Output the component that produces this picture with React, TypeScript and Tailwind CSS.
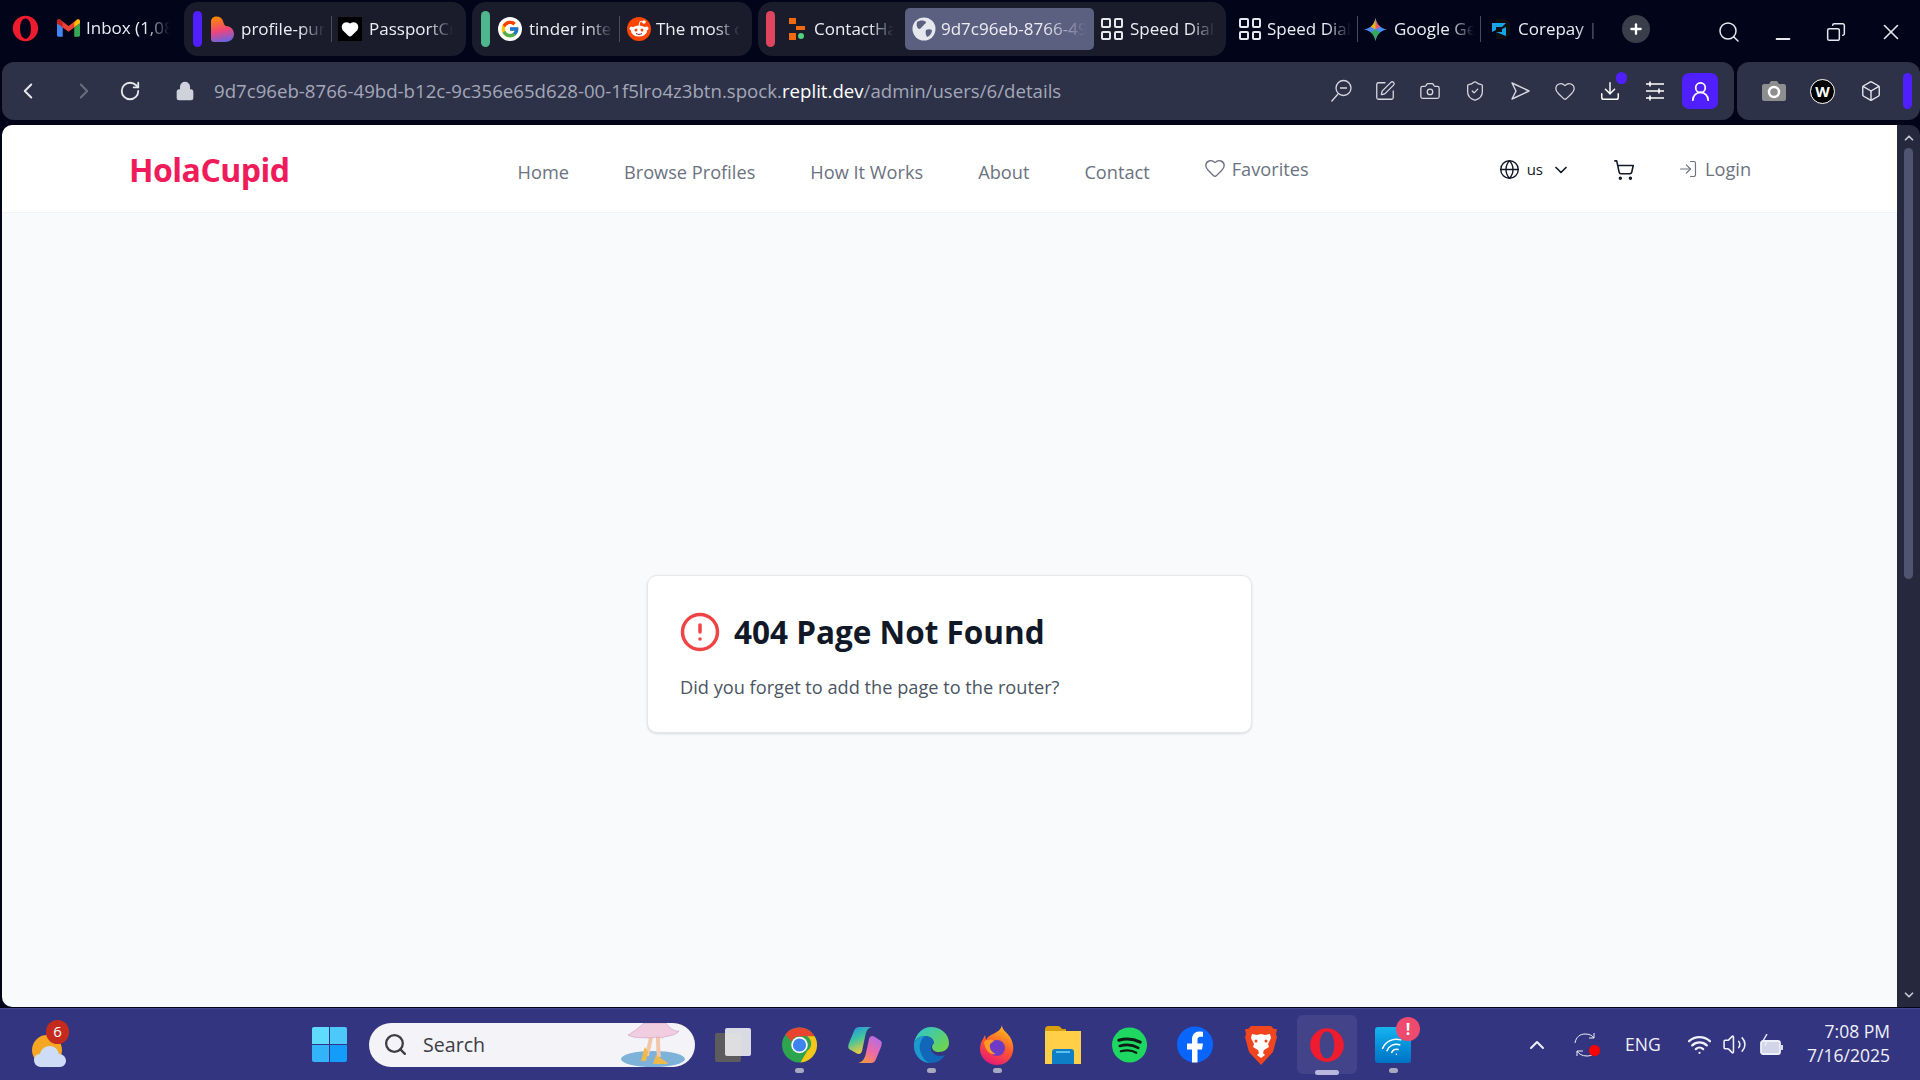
import React from "react";
import { FcGoogle } from "react-icons/fc";
import {
  ChevronDown,
  ChevronLeft,
  ChevronRight,
  ChevronUp,
  CircleAlert,
  Globe,
  Heart,
  LogIn,
  RotateCw,
  Search,
  ShoppingCart,
  Lock,
  Minus,
  X,
  Copy,
  SquarePen,
  Camera,
  ShieldCheck,
  Download,
  UserRound,
  Box,
  Plus,
  Wifi,
  Volume2,
} from "lucide-react";

const OperaLogo = ({ size = 30 }: { size?: number }) => (
  <svg width={size} height={size} viewBox="0 0 32 32">
    <path
      fillRule="evenodd"
      fill="#ee1c2e"
      d="M16 1c8.300 0 15 6.700 15 15s-6.700 15-15 15S1 24.300 1 16 7.700 1 16 1Zm0 3c-4 0-6.500 5.400-6.500 12S12 28 16 28s6.500-5.400 6.500-12S20 4 16 4Z"
    />
  </svg>
);

const GmailIcon = () => (
  <svg width="23" height="18" viewBox="0 0 24 18">
    <path fill="#4285f4" d="M0 4v12.500C0 17.300.7 18 1.500 18H6V8Z" />
    <path fill="#34a853" d="M24 4v12.500c0 .8-.7 1.500-1.500 1.500H18V8Z" />
    <path fill="#ea4335" d="M0 2c0-2 2.300-2.700 3.500-1.500L12 7l8.500-6.500C21.700-.7 24 0 24 2v2l-12 9L0 4Z" />
    <path fill="#fbbc04" d="M18 3.500 20.500.5C21.700-.7 24 0 24 2v2l-6 4Z" />
    <path fill="#c5221f" d="M0 2c0-2 2.300-2.700 3.500-1.500L6 3v5L0 4Z" />
  </svg>
);

const PinkHeart = () => (
  <svg width="24" height="26" viewBox="0 0 24 26">
    <defs>
      <linearGradient id="ph" x1="0.3" y1="0" x2="0.5" y2="1">
        <stop offset="0" stopColor="#ff8a00" />
        <stop offset="0.55" stopColor="#f0457a" />
        <stop offset="1" stopColor="#6a64e0" />
      </linearGradient>
    </defs>
    <path fill="url(#ph)" d="M1 6c0-7 10-7 12-1 1 3 1 4 3 5 4 0 8 3 8 8s-4 8-9 8H4c-2 0-3-1-3-3Z" />
  </svg>
);

const PassportIcon = () => (
  <div className="flex h-6 w-6 items-center justify-center bg-black">
    <Heart size={18} fill="#fff" color="#fff" />
  </div>
);

const GoogleIcon = () => (
  <div className="flex h-6 w-6 items-center justify-center rounded-full bg-white">
    <FcGoogle size={20} />
  </div>
);

const RedditIcon = () => (
  <svg width="24" height="24" viewBox="0 0 24 24">
    <circle cx="12" cy="12" r="12" fill="#ff4500" />
    <ellipse cx="12" cy="14" rx="8" ry="5.500" fill="#fff" />
    <circle cx="4.500" cy="11.500" r="2" fill="#fff" />
    <circle cx="19.500" cy="11.500" r="2" fill="#fff" />
    <circle cx="17" cy="5" r="1.800" fill="#fff" />
    <path d="M12 9 13 4.500 17 5" stroke="#fff" strokeWidth="1" fill="none" />
    <circle cx="9" cy="13" r="1.500" fill="#ff4500" />
    <circle cx="15" cy="13" r="1.500" fill="#ff4500" />
    <path d="M9 16.500c2 1.200 4 1.200 6 0" stroke="#842123" strokeWidth="1" fill="none" />
  </svg>
);

const ContactIcon = () => (
  <svg width="16" height="22" viewBox="0 0 16 22">
    <rect x="0" y="0" width="7" height="6" fill="#f26a0f" />
    <rect x="7" y="8" width="9" height="4" fill="#f26a0f" />
    <rect x="0" y="15" width="7" height="7" fill="#f26a0f" />
    <circle cx="12" cy="18" r="3" fill="#4fd27b" />
  </svg>
);

const TabGlobe = () => (
  <svg width="24" height="24" viewBox="0 0 24 24">
    <circle cx="12" cy="12" r="11.500" fill="#e6e8ee" />
    <path fill="#5c6080" d="M5 5c3-2 7-2 9 0 0 2-2 2-3 4-2 1-2 3-4 3-2-1-3-4-2-7Zm9 8c2-1 4-1 6 0 0 3-2 6-5 7-1-2-2-4-1-7Z" />
  </svg>
);

const SpeedDialIcon = () => (
  <div className="grid h-[22px] w-[22px] grid-cols-2 gap-[3px]">
    <span className="rounded-[2px] border-2 border-[#e6e8ee]" />
    <span className="rounded-[2px] border-2 border-[#e6e8ee]" />
    <span className="rounded-[2px] border-2 border-[#e6e8ee]" />
    <span className="rounded-[2px] border-2 border-[#e6e8ee]" />
  </div>
);

const GeminiIcon = () => (
  <svg width="23" height="25" viewBox="0 0 24 24">
    <path fill="#4a8cf7" d="M12 0c1 6 5 11 12 12-7 1-11 6-12 12-1-6-5-11-12-12C7 11 11 6 12 0Z" />
    <path fill="#ec5a62" d="M12 0c.5 4 2 7 5 9l-5 3Z" />
    <path fill="#f4b400" d="M12 0c-.5 4-2 7-5 9l5 3Z" />
    <path fill="#35a85a" d="M12 24c-.5-4-2-7-5-9l5-3 5 3c-3 2-4.500 5-5 9Z" />
  </svg>
);

const CorepayIcon = () => (
  <svg width="20" height="22" viewBox="0 0 20 22">
    <path fill="#0f0f14" d="M5 1h9l5 4v12l-5 4H5Z" />
    <path fill="#16a6e8" d="M1 5h14l-4 4H5v3l-4 2ZM5 14h6v-3l4-2v9Z" />
  </svg>
);

const Tab = ({
  icon,
  label,
  className = "w-[84px]",
  gap = "ml-[7px]",
}: {
  icon: React.ReactNode;
  label: string;
  className?: string;
  gap?: string;
}) => (
  <div className="flex items-center">
    {icon}
    <span
      className={`${gap} ${className} whitespace-nowrap text-[17px] text-[#eceef3] [mask-image:linear-gradient(90deg,#000_70%,transparent)]`}
    >
      {label}
    </span>
  </div>
);

const Sep = ({ className = "" }: { className?: string }) => (
  <span className={`h-[26px] w-px bg-[#4a4c5c] ${className}`} />
);

const TabBar = () => (
  <div className="flex h-[62px] items-start pt-[2px]">
    <div className="ml-[12px] mt-[13px]">
      <OperaLogo size={27} />
    </div>
    <div className="ml-[18px] mt-[13px] flex">
      <Tab icon={<GmailIcon />} label="Inbox (1,08" gap="ml-[6px]" />
    </div>

    <div className="ml-[14px] flex h-[54px] w-[282px] items-center rounded-[14px] bg-[#1a1c2c] pl-[9px]">
      <span className="h-9 w-[9px] rounded-full bg-[#4f1fff]" />
      <div className="ml-[8px]">
        <Tab icon={<PinkHeart />} label="profile-pur" />
      </div>
      <Sep className="ml-[6px]" />
      <div className="ml-[6px]">
        <Tab icon={<PassportIcon />} label="PassportCr" />
      </div>
    </div>

    <div className="ml-[6px] flex h-[54px] w-[280px] items-center rounded-[14px] bg-[#1a1c2c] pl-[9px]">
      <span className="h-9 w-[9px] rounded-full bg-[#4fb58c]" />
      <div className="ml-[8px]">
        <Tab icon={<GoogleIcon />} label="tinder inte" />
      </div>
      <Sep className="ml-[6px]" />
      <div className="ml-[7px]">
        <Tab icon={<RedditIcon />} label="The most c" gap="ml-[5px]" />
      </div>
    </div>

    <div className="ml-[6px] flex h-[54px] w-[468px] items-center rounded-[14px] bg-[#1a1c2c] pl-[8px]">
      <span className="h-9 w-[9px] rounded-full bg-[#e0455f]" />
      <div className="ml-[14px]">
        <Tab icon={<ContactIcon />} label="ContactHa" gap="ml-[9px]" className="w-[80px]" />
      </div>
      <div className="ml-[11px] flex h-[42px] w-[189px] items-center rounded-[5px] bg-[#5c6080] pl-[7px]">
        <Tab icon={<TabGlobe />} label="9d7c96eb-8766-49" gap="ml-[5px]" className="w-[146px]" />
      </div>
      <div className="ml-[7px]">
        <Tab icon={<SpeedDialIcon />} label="Speed Dial" className="w-[85px]" />
      </div>
    </div>

    <div className="ml-[13px] mt-[13px] flex items-center">
      <Tab icon={<SpeedDialIcon />} label="Speed Dial" gap="ml-[6px]" className="w-[84px]" />
      <Sep className="ml-[6px]" />
      <div className="ml-[6px]">
        <Tab icon={<GeminiIcon />} label="Google Ge" className="w-[80px]" />
      </div>
      <Sep className="ml-[6px]" />
      <div className="ml-[10px]">
        <Tab icon={<CorepayIcon />} label="Corepay | " gap="ml-[7px]" className="w-[84px]" />
      </div>
      <div className="ml-[20px] flex h-[28px] w-[28px] items-center justify-center rounded-full bg-[#3a3d4a]">
        <Plus size={16} color="#fff" strokeWidth={3.5} />
      </div>
    </div>

    <div className="ml-auto mt-[12px] mr-[16px] flex items-center gap-[32px] text-[#e6e8ee]">
      <Search size={24} strokeWidth={1.5} className="mr-[-1px]" />
      <Minus size={22} strokeWidth={2} className="mt-[14px]" />
      <Copy size={20} strokeWidth={1.8} className="-scale-x-100" />
      <X size={26} strokeWidth={1.5} />
    </div>
  </div>
);

const AddressBar = () => (
  <div className="flex h-[58px] gap-[3px] pl-[2px]">
    <div className="flex w-[1732px] items-center rounded-[12px] bg-[#2e3248]">
      <ChevronLeft size={26} strokeWidth={1.8} color="#e6e8ee" className="ml-[13px]" />
      <ChevronRight size={26} strokeWidth={1.8} color="#6a6e82" className="ml-[30px]" />
      <RotateCw size={22} strokeWidth={2} color="#e6e8ee" className="ml-[22px]" />
      <Lock size={20} fill="#cfd2da" color="#cfd2da" className="ml-[34px]" />
      <div className="ml-[19px] whitespace-nowrap text-[18.65px] text-[#a3a7b8]">
        9d7c96eb-8766-49bd-b12c-9c356e65d628-00-1f5lro4z3btn.spock.
        <span className="text-white">replit.dev</span>/admin/users/6/details
      </div>
      <div className="ml-auto flex items-center gap-[23px] text-[#d6d8e0]">
        <svg width="22" height="24" viewBox="0 0 22 24" fill="none" stroke="currentColor" strokeWidth="1.300" className="mr-[-1px]">
          <circle cx="13.500" cy="9" r="7.500" />
          <path d="M10 9h7M8 15l-6.500 7.500" />
        </svg>
        <SquarePen size={22} strokeWidth={1.4} />
        <Camera size={22} strokeWidth={1.4} />
        <ShieldCheck size={22} strokeWidth={1.4} />
        <svg width="22" height="22" viewBox="0 0 22 22" fill="none" stroke="currentColor" strokeWidth="1.400">
          <path d="M3 3 20 11 3 19l4-8Z" strokeLinejoin="round" />
        </svg>
        <Heart size={22} strokeWidth={1.4} />
        <div className="relative text-white">
          <Download size={22} strokeWidth={1.6} />
          <span className="absolute -right-[6px] -top-[8px] h-[12px] w-[11px] rounded-full bg-[#4f1fff]" />
        </div>
        <svg width="22" height="22" viewBox="0 0 22 22" fill="none" stroke="#fff" strokeWidth="1.600">
          <path d="M2 4h18M2 11h18M2 18h18M6 1.500v5M15 8.500v5M6 15.500v5" />
        </svg>
      </div>
      <div className="ml-[16px] mr-[16px] flex h-9 w-9 items-center justify-center rounded-[7px] bg-[#4f1fff]">
        <UserRound size={23} strokeWidth={1.8} color="#fff" />
      </div>
    </div>
    <div className="flex flex-1 items-center rounded-[12px] bg-[#2e3248] pr-[8px]">
      <svg className="ml-[25px]" width="24" height="22" viewBox="0 0 24 22">
        <path fill="#8e8e8e" d="M2 4h5l2-3h6l2 3h5c1 0 2 1 2 2v13c0 1-1 2-2 2H2c-1 0-2-1-2-2V6c0-1 1-2 2-2Z" />
        <circle cx="12" cy="12" r="5" fill="none" stroke="#fff" strokeWidth="2.500" />
      </svg>
      <div className="ml-[24px] flex h-[25px] w-[25px] items-center justify-center rounded-full border border-white bg-black text-[15px] font-bold leading-none text-white">
        W
      </div>
      <Box size={22} strokeWidth={1.5} color="#e6e8ee" className="ml-[25px]" />
      <span className="ml-auto h-9 w-[9px] rounded-full bg-[#4f1fff]" />
    </div>
  </div>
);

const NavBar = () => (
  <header className="flex h-[88px] items-center border-b border-[#f1f2f4] bg-white pt-[5px] text-[#6b7280]">
    <span className="-mt-[2px] ml-[127px] text-[32px] font-bold tracking-[-0.5px] text-[#f01b5a]">HolaCupid</span>
    <nav className="ml-[228px] flex items-center gap-[55px] pt-[3px] text-[18.2px] font-medium">
      <span>Home</span>
      <span>Browse Profiles</span>
      <span>How It Works</span>
      <span>About</span>
      <span>Contact</span>
    </nav>
    <div className="ml-[54px] flex items-center gap-[6px] pb-[3px] text-[18.2px] font-medium">
      <Heart size={22} strokeWidth={1.5} className="-mt-[2px]" />
      <span>Favorites</span>
    </div>
    <div className="ml-[190px] flex items-center pb-[3px] text-[#111827]">
      <Globe size={21} strokeWidth={1.6} />
      <span className="ml-[7px] text-[15px] font-medium">us</span>
      <ChevronDown size={20} strokeWidth={2} className="ml-[8px]" />
    </div>
    <ShoppingCart size={22} strokeWidth={1.7} color="#111827" className="ml-[42px] mb-[3px]" />
    <div className="ml-[43px] flex items-center gap-[7px] pb-[3px] text-[18.2px] font-medium">
      <LogIn size={20} strokeWidth={1.4} />
      <span>Login</span>
    </div>
  </header>
);

const NotFoundCard = () => (
  <main className="flex flex-1 justify-center bg-[#f9fafb] pt-[362px]">
    <div className="h-[158px] w-[605px] rounded-[10px] border border-[#e5e7eb] bg-white pl-[32px] pt-[32px] shadow-sm">
      <div className="flex items-center">
        <CircleAlert size={42} strokeWidth={2} color="#ef4444" className="-ml-[1px]" />
        <h1 className="ml-[13px] text-[31.5px] font-bold text-[#111827]">404 Page Not Found</h1>
      </div>
      <p className="mt-[19px] text-[18.2px] text-[#4b5563]">Did you forget to add the page to the router?</p>
    </div>
  </main>
);

const Scrollbar = () => (
  <div className="flex w-[23px] flex-col items-center rounded-tr-[10px] bg-[#26293d]">
    <ChevronUp size={14} strokeWidth={3} color="#c4c7d2" className="mt-[6px]" />
    <div className="mt-[3px] h-[431px] w-[9px] rounded-full bg-[#505470]" />
    <ChevronDown size={14} strokeWidth={3} color="#c4c7d2" className="mb-[5px] mt-auto" />
  </div>
);

const WeatherIcon = () => (
  <div className="relative h-[44px] w-[36px]">
    <span className="absolute left-[1px] top-[12px] h-[30px] w-[30px] rounded-full bg-[#f5a623]" />
    <svg className="absolute bottom-0 left-[3px]" width="32" height="24" viewBox="0 0 32 24">
      <path fill="#cfdcf7" d="M7 24C2 24 0 20 0 17c0-4 3-6 6-6 1-5 5-8 10-8 4 0 8 3 9 8 4 0 7 3 7 7 0 3-3 6-6 6Z" />
    </svg>
    <span className="absolute -top-[3px] left-[15px] flex h-[24px] w-[23px] items-center justify-center rounded-full bg-[#c42b1c] text-[15px] text-white">
      6
    </span>
  </div>
);

const WinLogo = () => (
  <div className="grid h-[35px] w-[35px] grid-cols-2 gap-[1px]">
    <span className="rounded-tl-[2px] bg-[#5fdcfb]" />
    <span className="rounded-tr-[2px] bg-[#4cc8fb]" />
    <span className="rounded-bl-[2px] bg-[#33b3fa]" />
    <span className="rounded-br-[2px] bg-[#149cfa]" />
  </div>
);

const Dancer = () => (
  <svg width="70" height="44" viewBox="0 0 70 44">
    <ellipse cx="32" cy="36" rx="32" ry="8" fill="#7fb2d8" />
    <path d="M30 14c-1 7-3 12-4 19" stroke="#f2c6a8" strokeWidth="4" fill="none" />
    <path d="M37 14c0 7 0 12 1 20" stroke="#f2c6a8" strokeWidth="4" fill="none" />
    <path d="M20 38c2-6 2-10 4-14l3 5-2 9Z" fill="#f0b94a" />
    <path d="M32 41l3-9 12 8-1 1Z" fill="#f0b94a" />
    <path d="M7 12C14 8 20 3 23 0h22c3 5 9 9 13 8-5 6-12 4-17 7-5-2-9 0-14 0-5-1-12 1-20-3Z" fill="#f1cde0" stroke="#d5a5c5" strokeWidth="0.7" />
  </svg>
);

const ChromeIcon = () => (
  <svg width="35" height="36" viewBox="0 0 36 36">
    <circle cx="18" cy="18" r="18" fill="#2da44e" />
    <path fill="#e8442f" d="M18 0a18 18 0 0 1 15.600 9H18a9 9 0 0 0-8.300 5.500L3.500 7A18 18 0 0 1 18 0Z" />
    <path fill="#f5c518" d="M33.600 9A18 18 0 0 1 19 36l7-12a9 9 0 0 0 0-15Z" />
    <circle cx="18" cy="18" r="8.500" fill="#fff" />
    <circle cx="18" cy="18" r="6.800" fill="#3f83ee" />
  </svg>
);

const CopilotIcon = () => (
  <svg width="34" height="38" viewBox="0 0 34 38">
    <defs>
      <linearGradient id="cp1" x1="0" y1="0" x2="0.4" y2="1">
        <stop offset="0" stopColor="#1f8fe8" />
        <stop offset="0.5" stopColor="#3fc4a0" />
        <stop offset="1" stopColor="#f2c93c" />
      </linearGradient>
      <linearGradient id="cp2" x1="0.8" y1="0" x2="0.2" y2="1">
        <stop offset="0" stopColor="#b06ee8" />
        <stop offset="0.55" stopColor="#ee6aa5" />
        <stop offset="1" stopColor="#f59a3c" />
      </linearGradient>
    </defs>
    <path fill="url(#cp1)" d="M11 1h13c-5 1-6 5-7 10l-3 14c-1 3-3 4-6 2l-7-4C0 22 0 20 1 17l5-12c1-3 3-4 5-4Z" />
    <path fill="url(#cp2)" d="M23 37H10c5-1 7-5 8-10l3-14c1-3 3-4 6-2l6 4c1 1 1 3 0 6l-5 12c-1 3-3 4-5 4Z" />
  </svg>
);

const EdgeIcon = () => (
  <svg width="36" height="38" viewBox="0 0 36 38">
    <defs>
      <linearGradient id="ed1" x1="0" y1="0" x2="1" y2="0.8">
        <stop offset="0" stopColor="#2bc3d9" />
        <stop offset="1" stopColor="#6fd54a" />
      </linearGradient>
    </defs>
    <path fill="url(#ed1)" d="M18 1c10 0 18 7 18 16 0 6-5 9-10 9-4 0-7-2-7-5 0-2 1-3 2-4-1-5-5-7-9-7-5 0-9 3-11 7C3 8 9 1 18 1Z" />
    <path fill="#1267b8" d="M1 17c2-4 6-7 11-7s8 2 9 7c-3 2-4 5-2 9 3 4 8 5 13 3-3 5-8 8-14 8C8 37 0 29 1 17Z" />
    <path fill="#1c9ad0" d="M1 17c2-4 6-7 11-7-4 3-6 8-5 14 1 5 4 10 9 13C7 36 0 28 1 17Z" />
  </svg>
);

const FirefoxIcon = () => (
  <svg width="34" height="40" viewBox="0 0 34 40">
    <defs>
      <linearGradient id="ff1" x1="0.7" y1="0" x2="0.3" y2="1">
        <stop offset="0" stopColor="#ffc31f" />
        <stop offset="0.5" stopColor="#ff5a2c" />
        <stop offset="1" stopColor="#e6177a" />
      </linearGradient>
    </defs>
    <path fill="url(#ff1)" d="M22 0c0 5 4 6 8 12 4 7 4 13 2 18-3 7-9 10-15 10C8 40 0 33 0 24c0-4 1-7 3-10l2-4 1 5c2-4 5-5 7-6 4-2 8-4 9-9Z" />
    <circle cx="17" cy="23" r="8" fill="#6e3bc7" />
    <path fill="#ff9a25" d="M4 17c3-3 7-3 10-1l-4 3c-1 4 1 8 6 10-6 1-11-3-12-12Z" />
  </svg>
);

const FolderIcon = () => (
  <svg width="36" height="38" viewBox="0 0 36 38">
    <path fill="#d89e0c" d="M0 3c0-1 1-3 3-3h10c2 0 3 2 4 3h4v5H0Z" />
    <path fill="#ffcf47" d="M0 5h36v33H0Z" />
    <path fill="#0e7fc6" d="M7 26c0-2 1-3 3-3h16c2 0 3 1 3 3v12H7Z" />
    <rect x="11" y="25" width="14" height="2" fill="#5cc0ef" />
  </svg>
);

const SpotifyIcon = () => (
  <svg width="35" height="36" viewBox="0 0 36 36">
    <circle cx="18" cy="18" r="18" fill="#1ed760" />
    <g fill="none" stroke="#0f1a14" strokeLinecap="round">
      <path d="M7 13c8-2 16-1 22 2" strokeWidth="3.200" />
      <path d="M8 19c7-2 14-1 19 2" strokeWidth="2.700" />
      <path d="M9 24.500c6-1.500 12-1 16 1.500" strokeWidth="2.200" />
    </g>
  </svg>
);

const FacebookIcon = () => (
  <svg width="36" height="37" viewBox="0 0 36 36">
    <circle cx="18" cy="18" r="18" fill="#0866ff" />
    <path fill="#fff" d="M15 36V23h-5v-6h5v-4c0-5 3-8 7-8 2 0 4 .3 4 .3v5h-2.500c-2.300 0-3 1.400-3 3V17H26l-1 6h-4.500v13Z" />
  </svg>
);

const BraveIcon = () => (
  <svg width="32" height="40" viewBox="0 0 32 40">
    <path fill="#f1451f" d="M6 1h20l3 3 3 0-1 5 1 3-4 15-12 13L4 27 0 12l1-3-1-5h3Z" />
    <path fill="#fff" d="M7 9l5 1 4-1 4 1 5-1 1 4-3 6 1 3-5 3-1 3 2 2-4 3-4-3 2-2-1-3-5-3 1-3-3-6Z" />
    <circle cx="11" cy="16" r="1.500" fill="#f1451f" />
    <circle cx="21" cy="16" r="1.500" fill="#f1451f" />
  </svg>
);

const AppIcon = () => (
  <div className="relative h-[36px] w-[36px] rounded-[3px] bg-gradient-to-b from-[#17b4ee] to-[#0072c6]">
    <Wifi size={24} strokeWidth={1.5} color="#fff" className="absolute left-[6px] top-[8px] -rotate-[25deg]" />
    <span className="absolute -right-[9px] -top-[10px] flex h-[24px] w-[24px] items-center justify-center rounded-full bg-[#ee4a6d] text-[16px] font-bold leading-none text-white">
      !
    </span>
  </div>
);

const dockApps = [
  { icon: <ChromeIcon />, dot: true },
  { icon: <CopilotIcon />, dot: false },
  { icon: <EdgeIcon />, dot: true },
  { icon: <FirefoxIcon />, dot: true },
  { icon: <FolderIcon />, dot: false },
  { icon: <SpotifyIcon />, dot: false },
  { icon: <FacebookIcon />, dot: false },
  { icon: <BraveIcon />, dot: false },
];

const DockSlot = ({ children, dot }: { children: React.ReactNode; dot?: boolean }) => (
  <div className="relative flex h-full w-[66px] items-center justify-center">
    {children}
    {dot && <span className="absolute bottom-[7px] h-[5px] w-[9px] rounded-full bg-[#a8a9c0]" />}
  </div>
);

const Taskbar = () => (
  <footer className="flex h-[72px] items-center border-t border-[#45468f] bg-[#343580] text-[#eef0fa]">
    <div className="ml-[31px]">
      <WeatherIcon />
    </div>
    <div className="ml-[245px]">
      <WinLogo />
    </div>
    <div className="ml-[22px] flex h-[44px] w-[326px] items-center overflow-hidden rounded-full bg-[#f3f3f8] text-[#3d3d45]">
      <Search size={25} strokeWidth={2.2} className="ml-[14px]" />
      <span className="ml-[15px] text-[19.6px]">Search</span>
      <div className="ml-auto mr-[4px]">
        <Dancer />
      </div>
    </div>
    <div className="relative ml-[20px] h-[34px] w-[36px]">
      <span className="absolute bottom-0 left-0 h-[29px] w-[26px] rounded-[2px] bg-[#5c5c5e]" />
      <span className="absolute right-0 top-0 h-[28px] w-[26px] rounded-[2px] bg-[#ececf0]/90" />
    </div>
    <div className="ml-[15px] flex h-full items-center">
      {dockApps.map((app, i) => (
        <DockSlot key={i} dot={app.dot}>
          {app.icon}
        </DockSlot>
      ))}
      <div className="relative flex h-[59px] w-[66px] items-center justify-center">
        <div className="flex h-[59px] w-[60px] items-center justify-center rounded-[6px] bg-[#424388]">
          <OperaLogo size={36} />
        </div>
        <span className="absolute bottom-[-1px] h-[5px] w-[24px] rounded-full bg-[#b9b9e0]" />
      </div>
      <DockSlot dot>
        <AppIcon />
      </DockSlot>
    </div>
    <ChevronUp size={24} strokeWidth={2} className="ml-[99px]" />
    <div className="relative ml-[25px] mr-[27px]">
      <svg width="24" height="26" viewBox="0 0 24 26" fill="none" stroke="currentColor" strokeWidth="1">
        <path d="M1 11C2 5 6 2 11 2c4 0 7 1 9 4M20 1v5h-5M23 15c-1 6-5 9-10 9-5 0-8-2-10-5M3 24v-5h6" />
      </svg>
      <span className="absolute bottom-[2px] right-[-2px] h-[11px] w-[11px] rounded-full bg-[#ff0000]" />
    </div>
    <span className="text-[17.5px]">ENG</span>
    <Wifi size={25} strokeWidth={2.2} className="ml-[26px]" />
    <Volume2 size={25} strokeWidth={1.5} className="ml-[10px]" />
    <svg className="ml-[13px]" width="24" height="22" viewBox="0 0 24 22" fill="none" stroke="currentColor" strokeWidth="1.800">
      <rect x="1" y="7" width="19" height="13" rx="2" fill="currentColor" fillOpacity="0.85" />
      <path d="M22 11v5" />
      <path d="M7 0 3 7h4l-2 5" strokeWidth="1.400" />
    </svg>
    <div className="ml-auto mr-[30px] -mt-[4px] text-right text-[17.5px] leading-[24px]">
      <div>7:08 PM</div>
      <div>7/16/2025</div>
    </div>
  </footer>
);

const App: React.FC = () => {
  return (
    <div className="flex h-[1080px] w-[1920px] flex-col overflow-hidden bg-[#02051a] font-['Open_Sans',sans-serif]">
      <TabBar />
      <AddressBar />
      <div className="mb-[1px] mt-[5px] flex min-h-0 flex-1 pl-[2px]">
        <div className="flex min-w-0 flex-1 flex-col overflow-hidden rounded-l-[10px]">
          <NavBar />
          <NotFoundCard />
        </div>
        <Scrollbar />
      </div>
      <Taskbar />
    </div>
  );
};

export default App;
